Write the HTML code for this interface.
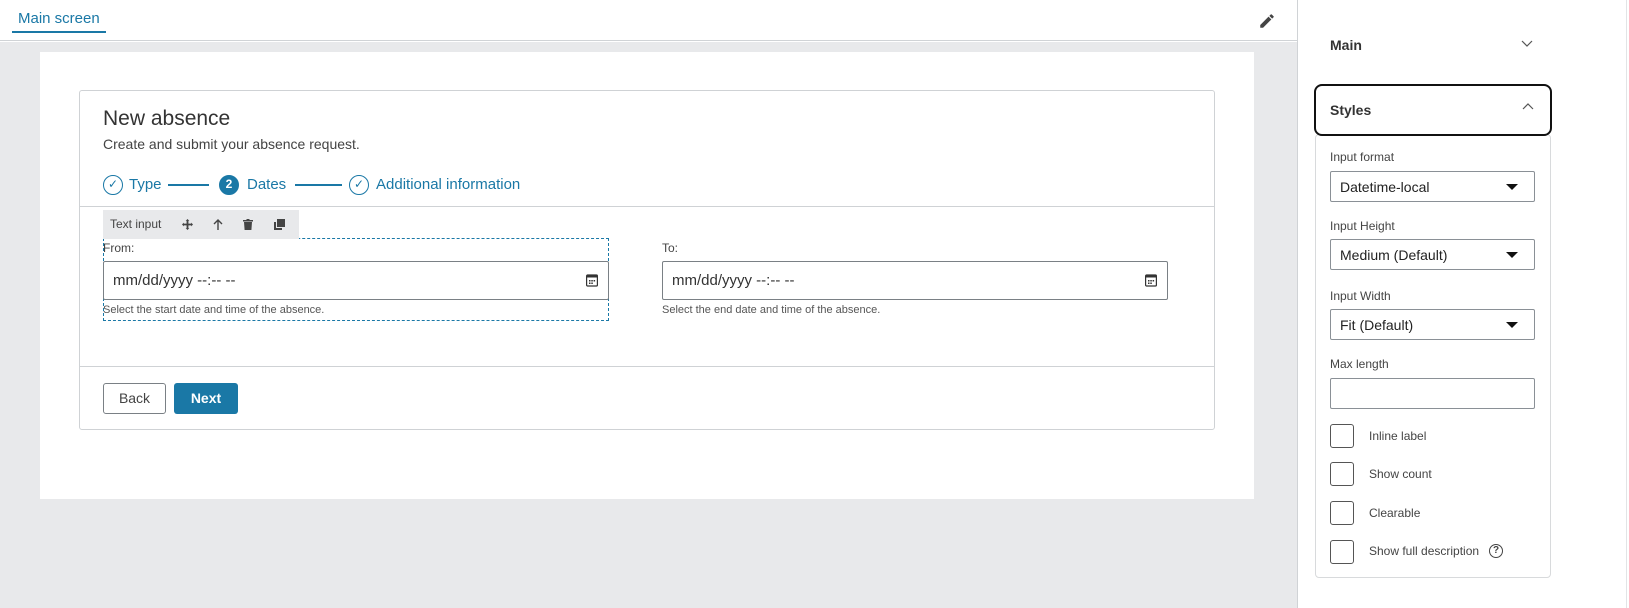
<!DOCTYPE html><html><head><style>
*{box-sizing:border-box;margin:0;padding:0}
body{width:1629px;height:608px;overflow:hidden;background:#fff;font-family:"Liberation Sans",sans-serif;position:relative;color:#333}
.a{position:absolute}
.sel{position:absolute;left:1330px;width:205px;height:31px;border:1px solid #8a9096;border-radius:2px;font-size:14px;padding:7px 0 0 9px;color:#222}
.sel:after{content:"";position:absolute;right:16px;top:12px;border-left:6px solid transparent;border-right:6px solid transparent;border-top:6px solid #111}
.lbl{position:absolute;left:1330px;font-size:12px;color:#444}
.cb{position:absolute;left:1330px;width:24px;height:24px;border:1px solid #555;border-radius:3px}
.cbl{position:absolute;left:1369px;font-size:12px;color:#444}
.inp{position:absolute;width:506px;height:39px;border:1px solid #7a8085;border-radius:2px;font-size:15px;padding:10px 0 0 9px;color:#333}
.cal{position:absolute;right:10px;top:12px}
.step{position:absolute;top:175px;width:20px;height:20px;border:1.5px solid #1a78a6;border-radius:50%;color:#1a78a6;font-size:12px;text-align:center;line-height:17px}
</style></head><body>
<div class="a" style="left:0;top:0;width:1297px;height:41px;background:#fff;border-bottom:1px solid #d0d3d6"></div>
<div class="a" style="left:18px;top:10px;font-size:15px;color:#1a78a6">Main screen</div>
<div class="a" style="left:12px;top:31px;width:94px;height:2px;background:#1a78a6"></div>
<svg class="a" style="left:1258px;top:12px" width="18" height="18" viewBox="0 0 24 24"><path d="M3 17.25V21h3.75L17.81 9.94l-3.75-3.75L3 17.25zM20.71 7.04a1 1 0 000-1.41l-2.34-2.34a1 1 0 00-1.41 0l-1.83 1.83 3.75 3.75 1.83-1.83z" fill="#444"/></svg>
<div class="a" style="left:0;top:42px;width:1297px;height:566px;background:#e8e9eb"></div>
<div class="a" style="left:40px;top:52px;width:1214px;height:447px;background:#fff"></div>
<div class="a" style="left:79px;top:90px;width:1136px;height:340px;border:1px solid #cfd2d5;border-radius:3px"></div>
<div class="a" style="left:103px;top:107px;font-size:21px;color:#333">New absence</div>
<div class="a" style="left:103px;top:136px;font-size:14px;color:#444">Create and submit your absence request.</div>
<div class="step" style="left:103px">✓</div>
<div class="a" style="left:129px;top:176px;font-size:15px;color:#1a78a6">Type</div>
<div class="a" style="left:168px;top:184px;width:41px;height:2px;background:#1a78a6"></div>
<div class="step" style="left:219px;background:#1a78a6;color:#fff;font-weight:bold">2</div>
<div class="a" style="left:247px;top:176px;font-size:15px;color:#1a78a6">Dates</div>
<div class="a" style="left:295px;top:184px;width:47px;height:2px;background:#1a78a6"></div>
<div class="step" style="left:349px">✓</div>
<div class="a" style="left:376px;top:176px;font-size:15px;color:#1a78a6">Additional information</div>
<div class="a" style="left:80px;top:206px;width:1134px;height:1px;background:#cfd2d5"></div>
<div class="a" style="left:103px;top:238px;width:506px;height:83px;border:1px dashed #1a78a6"></div>
<div class="a" style="left:103px;top:210px;width:196px;height:29px;background:#e8e9eb;font-size:12px;color:#444;padding:7px 0 0 7px">Text input
<svg class="a" style="left:79px;top:9px" width="11" height="11" viewBox="0 0 12 12"><path d="M6 0l2 2H7v3h3V4l2 2-2 2V7H7v3h1l-2 2-2-2h1V7H2v1L0 6l2-2v1h3V2H4z" fill="#444"/></svg>
<svg class="a" style="left:110px;top:9px" width="10" height="11" viewBox="0 0 10 11"><path d="M5 11V1M1 5l4-4 4 4" fill="none" stroke="#444" stroke-width="1.4"/></svg>
<svg class="a" style="left:140px;top:9px" width="10" height="11" viewBox="0 0 10 11"><path d="M0 1h10v1.5H0zM3.5 0h3v1h-3zM1 3h8l-.6 8H1.6z" fill="#444"/></svg>
<svg class="a" style="left:171px;top:9px" width="11" height="11" viewBox="0 0 11 11"><path d="M3 0h8v8H3z" fill="#444"/><path d="M0 3h2v6h6v2H0z" fill="#444"/></svg></div>
<div class="a" style="left:103px;top:241px;font-size:12px;color:#444">From:</div>
<div class="inp" style="left:103px;top:261px">mm/dd/yyyy --:-- --<svg class="cal" width="12" height="13" viewBox="0 0 12 13"><rect x="0.6" y="1" width="10.8" height="11" rx="1" fill="none" stroke="#333" stroke-width="1.2"/><rect x="0.6" y="1" width="10.8" height="2.5" fill="#333"/><path d="M3 6h1.5v1.5H3zM5.3 6h1.5v1.5H5.3zM7.6 6h1.5v1.5H7.6zM3 8.5h1.5V10H3zM5.3 8.5h1.5V10H5.3z" fill="#333"/></svg></div>
<div class="a" style="left:103px;top:304px;font-size:11px;color:#555">Select the start date and time of the absence.</div>
<div class="a" style="left:662px;top:241px;font-size:12px;color:#444">To:</div>
<div class="inp" style="left:662px;top:261px">mm/dd/yyyy --:-- --<svg class="cal" width="12" height="13" viewBox="0 0 12 13"><rect x="0.6" y="1" width="10.8" height="11" rx="1" fill="none" stroke="#333" stroke-width="1.2"/><rect x="0.6" y="1" width="10.8" height="2.5" fill="#333"/><path d="M3 6h1.5v1.5H3zM5.3 6h1.5v1.5H5.3zM7.6 6h1.5v1.5H7.6zM3 8.5h1.5V10H3zM5.3 8.5h1.5V10H5.3z" fill="#333"/></svg></div>
<div class="a" style="left:662px;top:304px;font-size:11px;color:#555">Select the end date and time of the absence.</div>
<div class="a" style="left:80px;top:366px;width:1134px;height:1px;background:#cfd2d5"></div>
<div class="a" style="left:103px;top:383px;width:63px;height:31px;border:1px solid #7a8085;border-radius:3px;font-size:14px;text-align:center;line-height:29px;color:#444">Back</div>
<div class="a" style="left:174px;top:383px;width:64px;height:31px;background:#1a78a6;border-radius:3px;font-size:14px;font-weight:bold;text-align:center;line-height:31px;color:#fff">Next</div>
<div class="a" style="left:1297px;top:0;width:1px;height:608px;background:#d0d3d6"></div>
<div class="a" style="left:1626px;top:0;width:1px;height:608px;background:#e2e4e6"></div>
<div class="a" style="left:1330px;top:37px;font-size:14px;font-weight:bold;color:#333">Main</div>
<svg class="a" style="left:1521px;top:40px" width="12" height="8"><path d="M1 1l5 5 5-5" fill="none" stroke="#555" stroke-width="1.2"/></svg>
<div class="a" style="left:1315px;top:134px;width:236px;height:444px;border:1px solid #d8dadc;border-radius:4px"></div>
<div class="a" style="left:1314px;top:84px;width:238px;height:52px;border:2px solid #111;border-radius:8px;background:#fff"></div>
<div class="a" style="left:1330px;top:102px;font-size:14px;font-weight:bold;color:#333">Styles</div>
<svg class="a" style="left:1522px;top:102px" width="12" height="8"><path d="M1 7l5-5 5 5" fill="none" stroke="#555" stroke-width="1.2"/></svg>
<div class="lbl" style="top:150px">Input format</div>
<div class="sel" style="top:171px">Datetime-local</div>
<div class="lbl" style="top:219px">Input Height</div>
<div class="sel" style="top:239px">Medium (Default)</div>
<div class="lbl" style="top:289px">Input Width</div>
<div class="sel" style="top:309px">Fit (Default)</div>
<div class="lbl" style="top:357px">Max length</div>
<div class="a" style="left:1330px;top:378px;width:205px;height:31px;border:1px solid #8a9096;border-radius:2px"></div>
<div class="cb" style="top:424px"></div><div class="cbl" style="top:429px">Inline label</div>
<div class="cb" style="top:462px"></div><div class="cbl" style="top:467px">Show count</div>
<div class="cb" style="top:501px"></div><div class="cbl" style="top:506px">Clearable</div>
<div class="cb" style="top:540px"></div><div class="cbl" style="top:544px">Show full description</div>
<div class="a" style="left:1489px;top:544px;width:14px;height:14px;border:1.5px solid #444;border-radius:50%;font-size:10px;font-weight:bold;text-align:center;line-height:11px;color:#444">?</div>
</body></html>
